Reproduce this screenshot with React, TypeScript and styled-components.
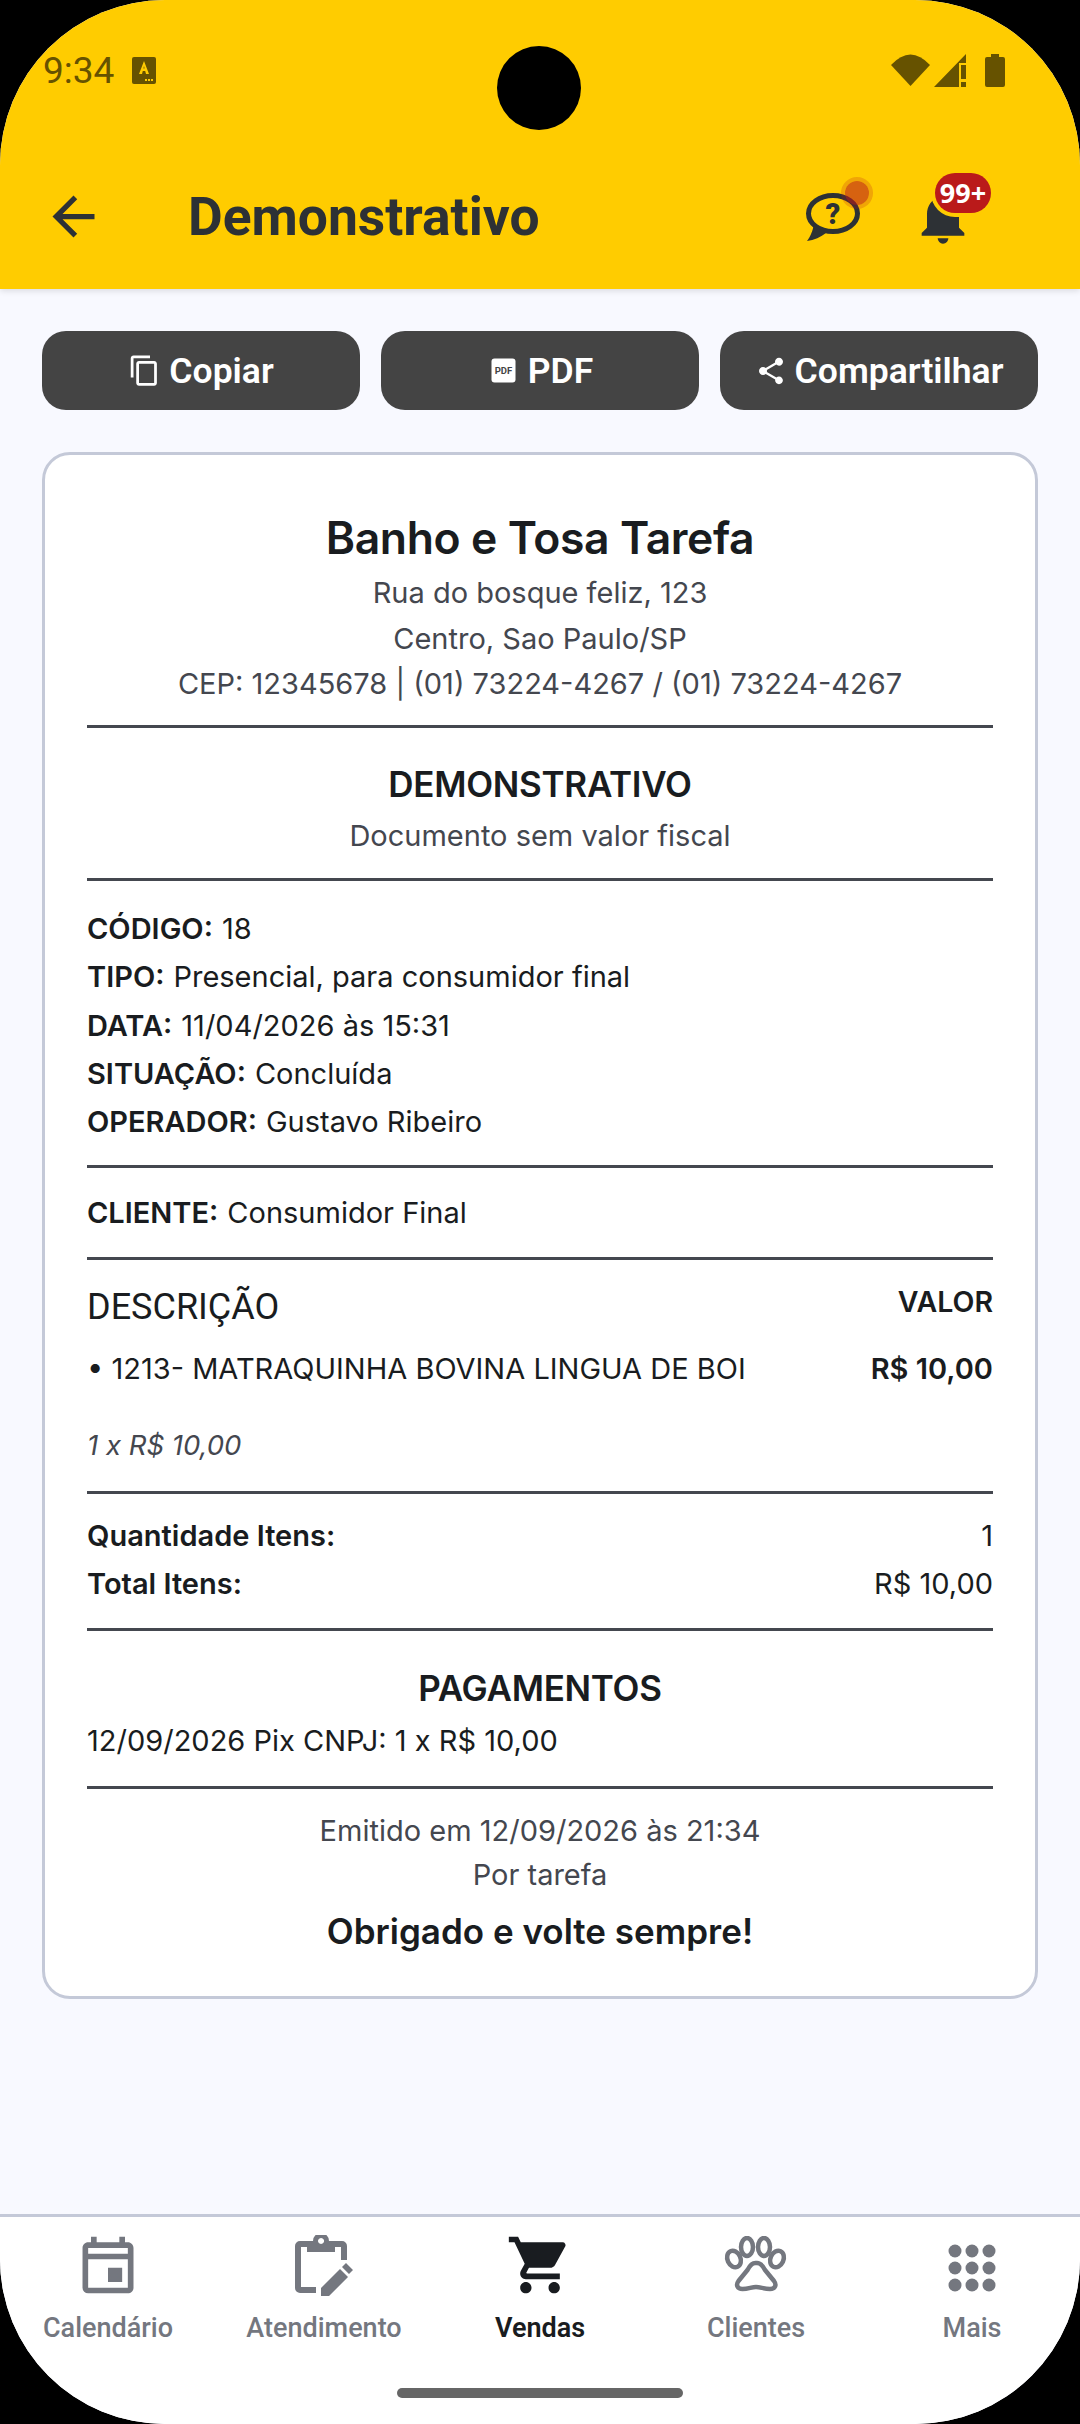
import React from 'react'
import styled, { createGlobalStyle } from 'styled-components'
import {
  MdArrowBack, MdNotifications, MdContentCopy, MdShare,
  MdOutlineEvent, MdShoppingCart,
} from 'react-icons/md'

const GlobalStyle = createGlobalStyle`
  html, body { margin: 0; padding: 0; background: #000; }
  * { box-sizing: border-box; }
`

const Screen = styled.div`
  width: 1080px;
  height: 2424px;
  display: flex;
  flex-direction: column;
  overflow: hidden;
  border-radius: 165px;
  background: #f8f9ff;
  font-family: Inter, "Liberation Sans", sans-serif;
  color: #191c20;
`

const Header = styled.header`
  height: 289px;
  flex: none;
  display: flex;
  flex-direction: column;
  background: #ffcc00;
  box-shadow: 0 2px 6px rgba(0, 0, 0, .12);
`

const StatusBar = styled.div`
  height: 144px;
  padding: 50px 75px 0 43px;
  display: grid;
  grid-template-columns: 1fr auto 1fr;
  align-items: start;
  color: #665200;
  font: 400 37px Roboto, sans-serif;
`

const StatusGroup = styled.div<{ $end?: boolean }>`
  display: flex;
  align-items: center;
  justify-content: ${({ $end }) => ($end ? 'flex-end' : 'flex-start')};
  gap: ${({ $end }) => ($end ? '4px' : '18px')};
  height: 40px;
`

const Camera = styled.div`
  width: 84px;
  height: 84px;
  margin: -4px 0 0 30px;
  border-radius: 50%;
  background: #000;
`

const AppBar = styled.div`
  display: flex;
  align-items: center;
  height: 145px;
  padding: 0 105px 0 42px;
  color: #2d3135;
`

const Title = styled.h1`
  flex: 1;
  margin: 0 0 0 83px;
  font: 700 53.400px Roboto, sans-serif;
`

const IconSlot = styled.div`
  position: relative;
  width: 64px;
  height: 64px;
  margin-left: 46px;
  display: flex;
  align-items: center;
  justify-content: center;
`

const Dot = styled.span`
  position: absolute;
  top: -4px;
  right: -4px;
  width: 24px;
  height: 24px;
  border-radius: 50%;
  background: rgba(186, 26, 26, .6);
  box-shadow: 0 0 0 4px rgba(186, 26, 26, .22);
`

const Badge = styled.span`
  position: absolute;
  top: -12px;
  right: -16px;
  width: 56px;
  height: 40px;
  text-align: center;
  border-radius: 20px;
  background: #ba1a1a;
  color: #fff;
  font: 700 27px/40px "Open Sans", sans-serif;
  box-shadow: 0 0 0 4px #ffcc00;
`

const Main = styled.main`
  flex: 1;
  padding: 42px 42px 0;
`

const ActionRow = styled.div`
  display: grid;
  grid-template-columns: repeat(3, 1fr);
  gap: 21px;
  margin-bottom: 42px;
`

const ActionButton = styled.button`
  height: 79px;
  border: 0;
  border-radius: 24px;
  background: #444;
  color: #fff;
  display: flex;
  align-items: center;
  justify-content: center;
  gap: 8px;
  padding: 0;
  font: 600 35.500px Roboto, sans-serif;
`

const Card = styled.section`
  height: 1547px;
  border: 3px solid #c4c9d8;
  border-radius: 28px;
  background: #fff;
  padding: 0 42px;
`

const Block = styled.div<{ $pad: string }>`
  padding: ${({ $pad }) => $pad};
  border-bottom: 3px solid #44474f;
`

const Footer = styled.div`
  padding-top: 20px;
  text-align: center;
`

const ShopName = styled.h2`
  margin: 0 0 1px;
  text-align: center;
  font: 600 44.500px/62px Inter, sans-serif;
  letter-spacing: -.4px;
`

const Muted = styled.div<{ $tight?: boolean }>`
  text-align: center;
  color: #44474f;
  font-size: 29px;
  line-height: ${({ $tight }) => ($tight ? '43.500px' : '45.500px')};
`

const SectionTitle = styled.h3`
  margin: 0 0 6px;
  text-align: center;
  font: 600 35px/46px Inter, sans-serif;
  letter-spacing: -.3px;
`

const Info = styled.div`
  font-size: 29px;
  line-height: 48.300px;
`

const Label = styled.b`
  font-weight: 600;
  margin-right: 9px;
`

const SpreadRow = styled.div<{ $gap?: number }>`
  display: flex;
  justify-content: space-between;
  margin-bottom: ${({ $gap }) => $gap ?? 0}px;
  font-size: 29px;
  line-height: 48px;
`

const ColumnTitle = styled.span`
  font: 400 36px/50px Roboto, sans-serif;
`

const ColumnValue = styled.span`
  font: 600 28.500px/40px Inter, sans-serif;
`

const Strong = styled.b`
  font-weight: 600;
`

const Qty = styled.div`
  margin-top: 30px;
  color: #44474f;
  font-style: italic;
  font-size: 27.500px;
  line-height: 44px;
`

const Thanks = styled.div`
  margin-top: 10px;
  font-weight: 600;
  font-size: 35px;
  line-height: 50px;
`

const Nav = styled.nav`
  flex: none;
  height: 210px;
  background: #fff;
  border-top: 3px solid #c4c9d8;
  display: flex;
  flex-direction: column;
`

const NavItems = styled.div`
  display: grid;
  grid-template-columns: repeat(5, 216px);
  padding-top: 14px;
`

const NavItem = styled.div<{ $active?: boolean }>`
  display: flex;
  flex-direction: column;
  align-items: center;
  gap: 12px;
  color: ${({ $active }) => ($active ? '#191c20' : '#74777f')};
  font: ${({ $active }) => ($active ? 600 : 500)} 27px/34px Roboto, sans-serif;
`

const NavIcon = styled.div`
  height: 68px;
  display: flex;
  align-items: center;
  justify-content: center;
`

const HomeBar = styled.div`
  width: 286px;
  height: 10px;
  margin: 43px auto 0;
  border-radius: 5px;
  background: #666;
`

const ChatIcon = () => (
  <svg width="54" height="48" viewBox="0 0 54 48">
    <ellipse cx="27" cy="20.500" rx="24.500" ry="18" fill="none" stroke="#2d3135" strokeWidth="5" />
    <path d="M8 30l4 5 8 5c-5 4-12 7-19 8 3-4 6-10 7-18z" fill="#2d3135" />
    <text x="27" y="31" textAnchor="middle" fontFamily="Roboto, sans-serif" fontWeight="900" fontSize="29" fill="#2d3135">?</text>
  </svg>
)

const ImeIcon = () => (
  <svg width="24" height="27" viewBox="0 0 24 27">
    <rect width="24" height="27" rx="2" fill="#665200" />
    <path fillRule="evenodd" d="M12 4l-5 13h3l.8-3h2.400l.8 3h3zM11.400 11.500L12 9l.6 2.500z" fill="#ffcc00" />
    <path d="M13 22h2v2h-2zM16 22h2v2h-2zM19 22h2v2h-2z" fill="#ffcc00" />
  </svg>
)

const WifiIcon = () => (
  <svg width="39" height="32" viewBox="0 0 39 32" fill="#665200">
    <path d="M0 11Q19.500-10 39 11L19.500 32z" />
  </svg>
)

// the blank right part of the box keeps the battery at its distance
const SignalIcon = () => (
  <svg width="47" height="33" viewBox="0 0 47 33" fill="#665200">
    <path d="M0 33L32 0v9h-7v24zM27 11h5v14h-5zM27 28h5v5h-5z" />
  </svg>
)

const BatteryIcon = () => (
  <svg width="20" height="33" viewBox="0 0 20 33" fill="#665200">
    <path d="M6 0h8v3h4a2 2 0 0 1 2 2v26a2 2 0 0 1-2 2H2a2 2 0 0 1-2-2V5a2 2 0 0 1 2-2h4z" />
  </svg>
)

const PdfIcon = () => (
  <svg width="33" height="33" viewBox="0 0 33 33">
    <rect x="4.500" y="4.500" width="24" height="24" rx="3" fill="#fff" />
    <text x="16.500" y="20" textAnchor="middle" fontFamily="Roboto, sans-serif" fontWeight="700" fontSize="9.500" fill="#444">PDF</text>
  </svg>
)

const ClipboardIcon = () => (
  <svg width="58" height="61" viewBox="0 0 58 61">
    <path d="M12 9H5a2 2 0 0 0-2 2v42a2 2 0 0 0 2 2h16M40 9h7a2 2 0 0 1 2 2v14" fill="none" stroke="#74777f" strokeWidth="6" />
    <path fillRule="evenodd" d="M12 6h6a8 8 0 0 1 16 0h6v11H12zM26 3a3 3 0 1 0 .1 0z" fill="#74777f" />
    <path d="M26 61v-8l19-19 8 8-19 19zM47 32l4-4 7 7-4 4z" fill="#74777f" />
  </svg>
)

const PawIcon = () => (
  <svg width="64" height="58" viewBox="0 0 64 58" fill="none" stroke="#74777f" strokeWidth="4.500">
    <ellipse cx="10" cy="23" rx="6.500" ry="8.500" transform="rotate(-25 10 23)" />
    <ellipse cx="23" cy="11" rx="6" ry="9" />
    <ellipse cx="40" cy="11" rx="6" ry="9" />
    <ellipse cx="53" cy="23" rx="6.500" ry="8.500" transform="rotate(25 53 23)" />
    <path d="M31.500 27c-4 0-6 3-8 7l-9 11c-3 4-1 8 4 8 6 0 9-2 13.500-2s8 2 14 2c5 0 7-4 4-8l-9-11c-2-4-4-7-8-7z" />
  </svg>
)

const MoreIcon = () => (
  <svg width="68" height="68" viewBox="0 0 68 68" fill="#74777f">
    {[20, 37, 54].map(y => [17, 34, 51].map(x => <circle key={`${x}-${y}`} cx={x} cy={y} r="6.500" />))}
  </svg>
)

export default function App() {
  return (
    <>
      <GlobalStyle />
      <Screen>
        <Header>
          <StatusBar>
            <StatusGroup>9:34 <ImeIcon /></StatusGroup>
            <Camera />
            <StatusGroup $end>
              <WifiIcon />
              <SignalIcon />
              <BatteryIcon />
            </StatusGroup>
          </StatusBar>
          <AppBar>
            <MdArrowBack size={63} />
            <Title>Demonstrativo</Title>
            <IconSlot><ChatIcon /><Dot /></IconSlot>
            <IconSlot><MdNotifications size={70} /><Badge>99+</Badge></IconSlot>
          </AppBar>
        </Header>
        <Main>
          <ActionRow>
            <ActionButton><MdContentCopy size={33} />Copiar</ActionButton>
            <ActionButton><PdfIcon />PDF</ActionButton>
            <ActionButton><MdShare size={32} />Compartilhar</ActionButton>
          </ActionRow>
          <Card>
            <Block $pad="52px 0 18px">
              <ShopName>Banho e Tosa Tarefa</ShopName>
              <Muted>Rua do bosque feliz, 123</Muted>
              <Muted>Centro, Sao Paulo/SP</Muted>
              <Muted>CEP: 12345678 | (01) 73224-4267 / (01) 73224-4267</Muted>
            </Block>
            <Block $pad="33px 0 20px">
              <SectionTitle>DEMONSTRATIVO</SectionTitle>
              <Muted>Documento sem valor fiscal</Muted>
            </Block>
            <Block $pad="24px 0 19px">
              <Info><Label>CÓDIGO:</Label>18</Info>
              <Info><Label>TIPO:</Label>Presencial, para consumidor final</Info>
              <Info><Label>DATA:</Label>11/04/2026 às 15:31</Info>
              <Info><Label>SITUAÇÃO:</Label>Concluída</Info>
              <Info><Label>OPERADOR:</Label>Gustavo Ribeiro</Info>
            </Block>
            <Block $pad="21px 0 19px">
              <Info><Label>CLIENTE:</Label>Consumidor Final</Info>
            </Block>
            <Block $pad="22px 0 24.500px">
              <SpreadRow $gap={13}>
                <ColumnTitle>DESCRIÇÃO</ColumnTitle>
                <ColumnValue>VALOR</ColumnValue>
              </SpreadRow>
              <SpreadRow>
                <span>• 1213- MATRAQUINHA BOVINA LINGUA DE BOI</span>
                <Strong>R$ 10,00</Strong>
              </SpreadRow>
              <Qty>1 x R$ 10,00</Qty>
            </Block>
            <Block $pad="18px 0 20px">
              <SpreadRow><Strong>Quantidade Itens:</Strong><span>1</span></SpreadRow>
              <SpreadRow><Strong>Total Itens:</Strong><span>R$ 10,00</span></SpreadRow>
            </Block>
            <Block $pad="34px 0 20.500px">
              <SectionTitle>PAGAMENTOS</SectionTitle>
              <Info>12/09/2026 Pix CNPJ: 1 x R$ 10,00</Info>
            </Block>
            <Footer>
              <Muted $tight>Emitido em 12/09/2026 às 21:34</Muted>
              <Muted $tight>Por tarefa</Muted>
              <Thanks>Obrigado e volte sempre!</Thanks>
            </Footer>
          </Card>
        </Main>
        <Nav>
          <NavItems>
            <NavItem><NavIcon><MdOutlineEvent size={68} /></NavIcon>Calendário</NavItem>
            <NavItem><NavIcon><ClipboardIcon /></NavIcon>Atendimento</NavItem>
            <NavItem $active><NavIcon><MdShoppingCart size={68} /></NavIcon>Vendas</NavItem>
            <NavItem><NavIcon><PawIcon /></NavIcon>Clientes</NavItem>
            <NavItem><NavIcon><MoreIcon /></NavIcon>Mais</NavItem>
          </NavItems>
          <HomeBar />
        </Nav>
      </Screen>
    </>
  )
}
